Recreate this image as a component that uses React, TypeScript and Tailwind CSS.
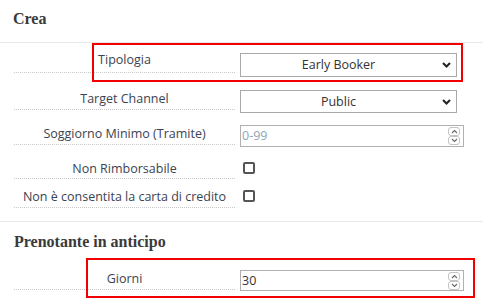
import React from "react";

const labelCls =
  "ml-[14px] w-[221px] text-center text-[12.5px] leading-[18px] text-[#3b4351] border-b border-dotted border-[#c8c8c8]";

function Chevron({ up }: { up?: boolean }) {
  return (
    <svg width="9" height="6" viewBox="0 0 9 6">
      <path
        d={up ? "M1 5 L4.5 1.5 L8 5" : "M1 1 L4.5 4.5 L8 1"}
        fill="none"
        stroke="#222"
        strokeWidth="2"
      />
    </svg>
  );
}

function SmallChev({ up }: { up?: boolean }) {
  return (
    <svg width="7" height="5" viewBox="0 0 7 5">
      <path
        d={up ? "M1 4 L3.5 1.5 L6 4" : "M1 1 L3.5 3.5 L6 1"}
        fill="none"
        stroke="#666"
        strokeWidth="1.1"
      />
    </svg>
  );
}

function Select({ text, h }: { text: string; h: string }) {
  return (
    <div
      className={`flex w-[217px] ${h} items-center border border-[#a9a9a9] bg-white`}
    >
      <div className="flex-1 text-center text-[12.5px] leading-[18px] text-[#333]">
        {text}
      </div>
      <div className="flex w-[20px] items-center justify-center">
        <Chevron />
      </div>
    </div>
  );
}

function NumberInput({
  value,
  placeholder,
  h,
}: {
  value?: string;
  placeholder?: string;
  h: string;
}) {
  return (
    <div
      className={`flex w-[224px] ${h} items-center border border-[#b0b0b0] bg-white`}
    >
      <div
        className={`flex-1 pl-[1px] text-[12.5px] leading-[18px] ${
          value ? "text-[#333]" : "text-[#8fa3b8]"
        }`}
      >
        {value ?? placeholder}
      </div>
      <div className="mr-[3px] flex h-full flex-col items-center justify-center">
        <div className="flex h-[9px] w-[12px] items-center justify-center rounded-[3px] border border-[#c4c4c4]">
          <SmallChev up />
        </div>
        <div className="flex h-[9px] w-[12px] items-center justify-center rounded-[3px] border border-[#c4c4c4]">
          <SmallChev />
        </div>
      </div>
    </div>
  );
}

function Checkbox() {
  return (
    <div className="ml-[3px] mt-[2px] h-[12px] w-[12px] rounded-[2px] border-2 border-[#555]" />
  );
}

export default function App() {
  const heading =
    "text-[16px] leading-[20px] font-bold text-[#3a3a3a]";
  return (
    <div
      className="relative h-[305px] w-[495px] overflow-hidden bg-white"
      style={{ fontFamily: "'Open Sans', sans-serif" }}
    >
      <div className="w-[483px]">
        <div className="h-[43px] border-b border-[#e9e9e9] pl-[13px] pt-[9px]">
          <div className={heading} style={{ fontFamily: "'Liberation Serif', serif" }}>
            Crea
          </div>
        </div>

        {/* Row 1 */}
        <div className="mt-[8px] flex items-start gap-[5px]">
          <div className={`${labelCls} pb-[3px]`}>Tipologia</div>
          <div className="mt-[2px]">
            <Select text="Early Booker" h="h-[24px]" />
          </div>
        </div>

        {/* Row 2 */}
        <div className="mt-[13px] flex items-start gap-[5px]">
          <div className={`${labelCls} pb-[1px]`}>Target Channel</div>
          <div>
            <Select text="Public" h="h-[23px]" />
          </div>
        </div>

        {/* Row 3 */}
        <div className="mt-[12px] flex items-start gap-[5px]">
          <div className={`${labelCls} pb-[1px]`}>Soggiorno Minimo (Tramite)</div>
          <div>
            <NumberInput placeholder="0-99" h="h-[22px]" />
          </div>
        </div>

        {/* Row 4 */}
        <div className="mt-[13px] flex items-start gap-[5px]">
          <div className={`${labelCls} pb-[0px]`}>Non Rimborsabile</div>
          <Checkbox />
        </div>

        {/* Row 5 */}
        <div className="mt-[9px] flex items-start gap-[5px]">
          <div className={`${labelCls} pb-[1px]`}>
            Non è consentita la carta di credito
          </div>
          <Checkbox />
        </div>

        <div className="mt-[13px] border-t border-[#e9e9e9]" />

        <div className="pl-[14px] pt-[10px]">
          <div className={heading} style={{ fontFamily: "'Liberation Serif', serif" }}>
            Prenotante in anticipo
          </div>
        </div>

        {/* Giorni */}
        <div className="mt-[18px] flex items-start gap-[5px]">
          <div className={`${labelCls} pb-[1px]`}>Giorni</div>
          <div>
            <NumberInput value="30" h="h-[21px]" />
          </div>
        </div>
      </div>

      {/* Annotation highlights */}
      <div className="absolute left-[92px] top-[43px] h-[39px] w-[371px] border-2 border-[#f20000]" />
      <div className="absolute left-[86px] top-[258px] h-[40px] w-[389px] border-2 border-[#f20000]" />
    </div>
  );
}
